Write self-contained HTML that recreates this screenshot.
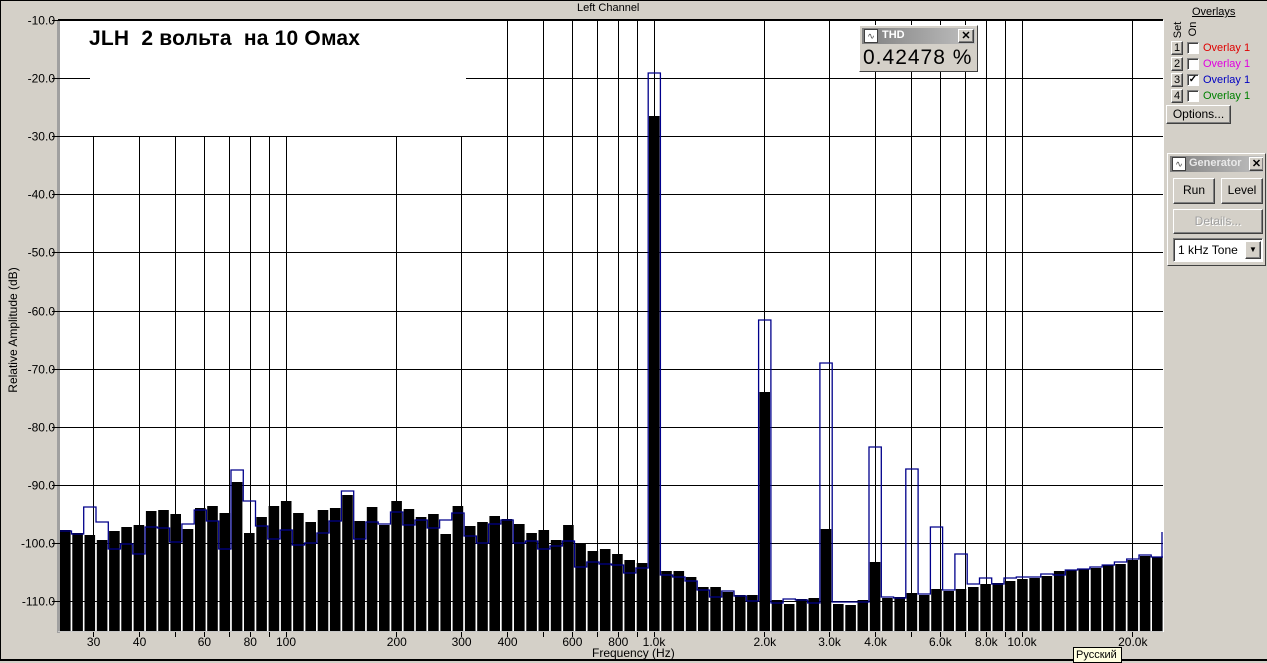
<!DOCTYPE html>
<html><head><meta charset="utf-8"><style>
*{margin:0;padding:0;box-sizing:border-box}
body{width:1267px;height:661px;background:#d4d0c8;font-family:"Liberation Sans",Arial,sans-serif;font-size:12px;position:relative;overflow:hidden}
.abs{position:absolute}
.btn{position:absolute;background:#d4d0c8;border:1px solid;border-color:#fff #404040 #404040 #fff;box-shadow:inset -1px -1px 0 #808080;text-align:center;font-size:12px}
.cb{position:absolute;width:12px;height:12px;background:#fff;border:1px solid;border-color:#808080 #fff #fff #808080;box-shadow:inset 1px 1px 0 #404040}
.lbl{position:absolute;font-size:11px}
</style></head><body>
<div class="abs" style="left:0;top:0;width:1267px;height:661px;border:1px solid #000;border-right:none"></div>
<div class="abs" style="left:577px;top:2px;font-size:11px;">Left Channel</div>
<svg class="abs" style="left:0;top:0" width="1267" height="661" id="chart"></svg>
<div class="abs" style="left:89px;top:27px;font-size:21px;font-weight:bold;font-family:'Liberation Sans','DejaVu Sans',sans-serif;letter-spacing:0.2px">JLH&nbsp; 2 вольта&nbsp; на 10 Омах</div>
<div class="abs" style="left:-62px;top:323px;width:150px;text-align:center;transform:rotate(-90deg);font-size:12px">Relative Amplitude (dB)</div>
<div class="abs" style="left:592px;top:646px;font-size:12px">Frequency (Hz)</div>
<!-- THD -->
<div class="abs" style="left:859px;top:25px;width:119px;height:47px;background:#d4d0c8;border:1px solid;border-color:#fff #404040 #404040 #fff">
 <div class="abs" style="left:2px;top:2px;width:113px;height:16px;background:linear-gradient(90deg,#808080,#c0c0c0)">
  <div class="abs" style="left:2px;top:1px;width:14px;height:14px;background:#fff;border:1px solid #404040;font-size:9px;line-height:12px;text-align:center;color:#444">∿</div>
  <div class="abs" style="left:20px;top:1px;color:#fff;font-weight:bold;font-size:11px">THD</div>
  <div class="btn" style="left:96px;top:1px;width:16px;height:14px;font-size:11px;line-height:12px;font-weight:bold">✕</div>
 </div>
 <div class="abs" style="left:3px;top:20px;font-size:21px;letter-spacing:1px">0.42478 %</div>
</div>
<!-- Overlays panel -->
<div class="abs" style="left:1192px;top:6px;font-size:11px;text-decoration:underline">Overlays</div>
<div class="abs" style="left:1168px;top:24px;font-size:11px;transform:rotate(-90deg);width:20px;text-align:center">Set</div>
<div class="abs" style="left:1183px;top:23px;font-size:11px;transform:rotate(-90deg);width:20px;text-align:center">On</div>
<div class="btn" style="left:1171px;top:41px;width:12px;height:14px;font-size:11px;line-height:12px">1</div>
<div class="cb" style="left:1187px;top:42px"></div><div class="lbl" style="left:1203px;top:42px;color:#e00000">Overlay 1</div>
<div class="btn" style="left:1171px;top:57px;width:12px;height:14px;font-size:11px;line-height:12px">2</div>
<div class="cb" style="left:1187px;top:58px"></div><div class="lbl" style="left:1203px;top:58px;color:#e000e0">Overlay 1</div>
<div class="btn" style="left:1171px;top:73px;width:12px;height:14px;font-size:11px;line-height:12px">3</div>
<div class="cb" style="left:1187px;top:74px;font-size:10px;line-height:9px;text-align:center;font-weight:bold">✓</div><div class="lbl" style="left:1203px;top:74px;color:#0000c0">Overlay 1</div>
<div class="btn" style="left:1171px;top:89px;width:12px;height:14px;font-size:11px;line-height:12px">4</div>
<div class="cb" style="left:1187px;top:90px"></div><div class="lbl" style="left:1203px;top:90px;color:#008000">Overlay 1</div>
<div class="btn" style="left:1166px;top:105px;width:65px;height:19px;line-height:16px">Options...</div>
<!-- Generator -->
<div class="abs" style="left:1167px;top:153px;width:99px;height:113px;border:1px solid;border-color:#fff #404040 #404040 #fff">
 <div class="abs" style="left:2px;top:2px;width:93px;height:16px;background:linear-gradient(90deg,#808080,#c0c0c0);overflow:hidden">
  <div class="abs" style="left:2px;top:1px;width:14px;height:14px;background:#fff;border:1px solid #404040;font-size:9px;line-height:12px;text-align:center;color:#444">∿</div>
  <div class="abs" style="left:19px;top:1px;color:#e8e8e8;font-weight:bold;font-size:11px">Generator</div>
  <div class="btn" style="left:79px;top:1px;width:15px;height:14px;font-size:11px;line-height:12px;font-weight:bold">✕</div>
 </div>
 <div class="btn" style="left:5px;top:24px;width:42px;height:26px;line-height:23px">Run</div>
 <div class="btn" style="left:53px;top:24px;width:42px;height:26px;line-height:23px">Level</div>
 <div class="btn" style="left:5px;top:55px;width:90px;height:25px;line-height:22px;color:#a0a0a0;text-shadow:1px 1px 0 #fff">Details...</div>
 <div class="abs" style="left:5px;top:84px;width:90px;height:24px;background:#fff;border:1px solid;border-color:#808080 #fff #fff #808080;box-shadow:inset 1px 1px 0 #404040">
  <div class="abs" style="left:4px;top:4px">1 kHz Tone</div>
  <div class="btn" style="left:71px;top:2px;width:16px;height:18px;font-size:8px;line-height:16px">▼</div>
 </div>
</div>
<div class="abs" style="left:1073px;top:647px;width:49px;height:16px;background:#ffffe1;border:1px solid #000;font-size:11px;padding-left:2px;line-height:14px">Русский</div>
<script>
var s='';
var L=60,R=1163,T=20,B=631;
function X(f){return 285+368*Math.log10(f/100);}
function Y(d){return 20+5.81*(-10-d);}
s+='<rect x="58" y="20" width="'+(R-58)+'" height="'+(B-20)+'" fill="#fff"/>';
s+='<rect x="57" y="20" width="3" height="'+(B-20+2)+'" fill="#a0a0a0"/>';
s+='<line x1="58" y1="19.5" x2="'+R+'" y2="19.5" stroke="#000"/>';
var fs=[30,40,50,60,70,80,90,100,200,300,400,500,600,700,800,900,1000,2000,3000,4000,5000,6000,7000,8000,9000,10000,20000];
fs.forEach(function(f){var x=Math.round(X(f)+0.6)+.5;var y0=(x>90&&x<466)?137:20;
s+='<line x1="'+x+'" y1="'+y0+'" x2="'+x+'" y2="'+(B+6)+'" stroke="#000"/>';});
for(var d=-10;d>=-110;d-=10){var y=Math.round(Y(d))+.5;
 if(d==-20){s+='<line x1="52" y1="'+y+'" x2="90" y2="'+y+'" stroke="#000"/><line x1="466" y1="'+y+'" x2="'+R+'" y2="'+y+'" stroke="#000"/>';}
 else s+='<line x1="52" y1="'+y+'" x2="'+R+'" y2="'+y+'" stroke="#000"/>';
 s+='<text x="55" y="'+(y+4)+'" font-size="12" text-anchor="end" font-family="Liberation Sans,sans-serif">'+d.toFixed(1)+'</text>';}
var blk=[530,533,535,540,531,527,525,511,510,514,529,508,506,513,482,533,517,506,501,513,522,510,508,495,521,507,525,501,509,
517,514,534,506,526,522,516,519,524,533,530,540,525,543,551,549,554,560,563,116,571,571,577,587,587,592,595,595,392,600,
604,599,598,529,604,605,600,562,598,597,593,595,589,591,589,587,584,583,581,579,578,576,571,570,569,568,565,564,560,556,557];
var blu=[531,534,507,522,549,544,554,527,528,542,524,510,521,549,470,501,526,539,530,545,543,533,521,491,539,522,524,512,525,
520,528,520,513,536,543,524,520,543,541,549,546,541,567,562,564,565,573,568,73,575,577,581,590,597,591,596,601,320,603,
599,600,603,363,602,602,602,447,597,598,469,594,527,590,554,584,578,584,578,577,577,574,575,570,569,567,565,562,559,555,557];
var sp=12.27;
for(var i=0;i<blk.length;i++){var x=L+sp*i;s+='<rect x="'+x.toFixed(1)+'" y="'+blk[i]+'" width="10.6" height="'+(B-blk[i])+'" fill="#000"/>';}
var p='M'+L+' '+blu[0];
for(var i=0;i<blu.length;i++){var x0=L+sp*i-0.8,x1=x0+sp;if(i>0)p+=' L'+x0.toFixed(1)+' '+blu[i];p+=' L'+x1.toFixed(1)+' '+blu[i];}
p+=' L'+(R-1)+' '+blu[blu.length-1]+' L'+(R-1)+' 532';
s+='<path d="'+p+'" fill="none" stroke="#00008b" stroke-width="1.3"/>';
s+='<line x1="'+(R+0.5)+'" y1="20" x2="'+(R+0.5)+'" y2="'+(B+1)+'" stroke="#fff"/>';
s+='<line x1="58" y1="'+(B+0.5)+'" x2="'+R+'" y2="'+(B+0.5)+'" stroke="#c8c8c8"/>';
var lab=[[30,'30'],[40,'40'],[60,'60'],[80,'80'],[100,'100'],[200,'200'],[300,'300'],[400,'400'],[600,'600'],[800,'800'],[1000,'1.0k'],[2000,'2.0k'],[3000,'3.0k'],[4000,'4.0k'],[6000,'6.0k'],[8000,'8.0k'],[10000,'10.0k'],[20000,'20.0k']];
lab.forEach(function(a){s+='<text x="'+(X(a[0])+1).toFixed(1)+'" y="646" font-size="12" text-anchor="middle" font-family="Liberation Sans,sans-serif">'+a[1]+'</text>';});
s+='<line x1="0" y1="659.5" x2="1267" y2="659.5" stroke="#000"/>';
document.getElementById('chart').innerHTML=s;
</script>
</body></html>
